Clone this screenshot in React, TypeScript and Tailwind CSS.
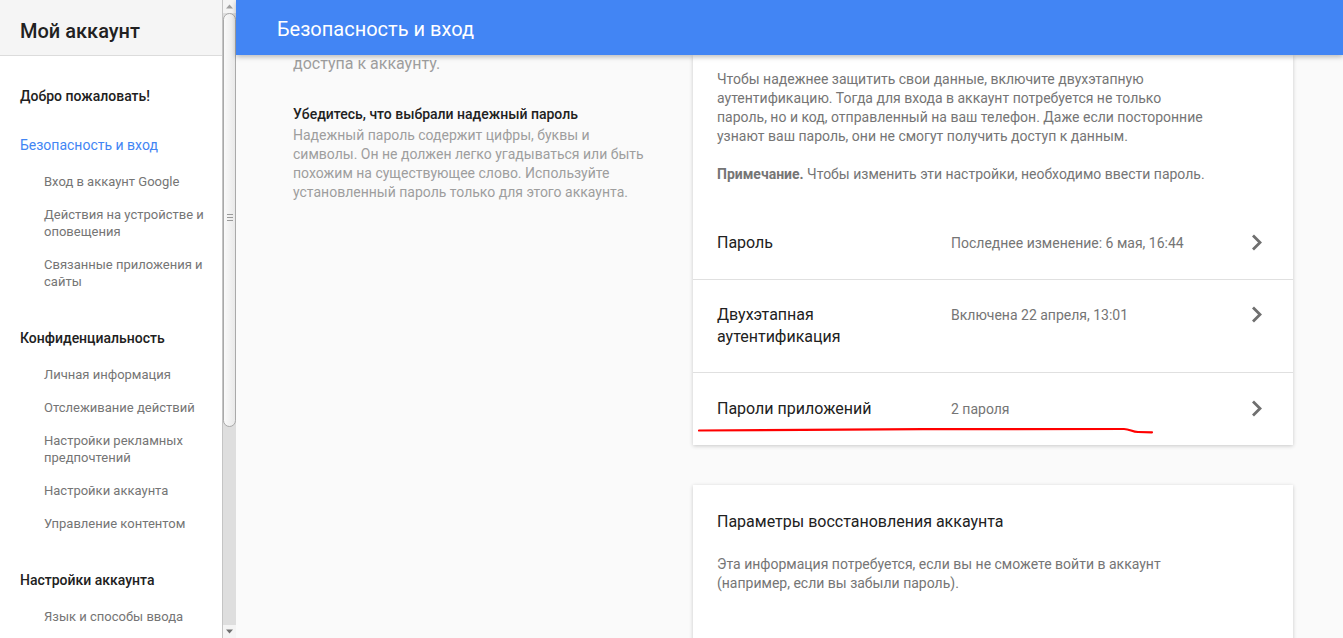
import React from "react";

const font = { fontFamily: "Roboto, 'Noto Sans', Arial, sans-serif" };

function Chevron() {
  return (
    <svg width="24" height="24" viewBox="0 0 24 24" className="shrink-0">
      <polyline points="8,4.5 15,11.5 8,18.5" fill="none" stroke="#6f6f6f" strokeWidth="2.8" strokeLinecap="butt" strokeLinejoin="miter" />
    </svg>
  );
}

function SubItem({ children }: { children: React.ReactNode }) {
  return <div className="pl-[44px] pr-[16px] text-[13px] leading-[17px] text-[#757575]">{children}</div>;
}

function Scrollbar() {
  return (
    <div className="flex w-[14px] shrink-0 flex-col bg-[#dedede] border-l border-[#c4c4c4]">
      <div className="flex h-[13px] items-center justify-center bg-[#f4f4f4]">
        <svg width="7" height="5" viewBox="0 0 7 5"><polygon points="3.5,0.5 7,4.5 0,4.5" fill="#a0a0a0" /></svg>
      </div>
      <div className="relative h-[414px] rounded-t-[7px] rounded-b-[7px] border border-[#a9a9a9] bg-gradient-to-r from-[#fafafa] to-[#e9e9e9]">
        <div className="absolute left-[3px] top-[200px] flex w-[6px] flex-col gap-[2px]">
          <div className="h-px bg-[#9a9a9a]" />
          <div className="h-px bg-[#9a9a9a]" />
          <div className="h-px bg-[#9a9a9a]" />
        </div>
      </div>
      <div className="flex-1" />
      <div className="flex h-[13px] items-center justify-center bg-[#f4f4f4]">
        <svg width="7" height="5" viewBox="0 0 7 5"><polygon points="0,0.5 7,0.5 3.5,4.5" fill="#707070" /></svg>
      </div>
    </div>
  );
}

function Row({ label, value, pad }: { label: React.ReactNode; value: string; pad: string }) {
  return (
    <div className={"flex items-start px-[24px] " + pad}>
      <div className="w-[234px] shrink-0 text-[16px] leading-[22px] text-[#212121]">{label}</div>
      <div className="flex-1 text-[14px] leading-[22px] text-[#757575]">{value}</div>
      <div className="-mt-px">
        <Chevron />
      </div>
    </div>
  );
}

export default function App() {
  return (
    <div className="flex h-[638px] w-full overflow-hidden bg-[#fafafa]" style={font}>
      {/* Sidebar */}
      <div className="flex h-full shrink-0">
        <div className="flex w-[222px] flex-col bg-white">
          <div className="flex h-[56px] shrink-0 items-center border-b border-[#dcdcdc] bg-[#f5f5f5] pl-[20px] pt-[6px]">
            <span className="text-[20px] font-medium text-[#212121]">Мой аккаунт</span>
          </div>
          <div className="flex flex-col pt-[30px]">
            <div className="pl-[20px] text-[14px] font-medium leading-[20px] text-[#212121]">Добро пожаловать!</div>
            <div className="mt-[29px] pl-[20px] text-[14px] leading-[20px] text-[#4285f4]">Безопасность и вход</div>
            <div className="mt-[18px] flex flex-col gap-[16px]">
              <SubItem>Вход в аккаунт Google</SubItem>
              <SubItem>Действия на устройстве и оповещения</SubItem>
              <SubItem>Связанные приложения и сайты</SubItem>
            </div>
            <div className="mt-[38px] pl-[20px] text-[14px] font-medium leading-[20px] text-[#212121]">Конфиденциальность</div>
            <div className="mt-[18px] flex flex-col gap-[16px]">
              <SubItem>Личная информация</SubItem>
              <SubItem>Отслеживание действий</SubItem>
              <SubItem>Настройки рекламных предпочтений</SubItem>
              <SubItem>Настройки аккаунта</SubItem>
              <SubItem>Управление контентом</SubItem>
            </div>
            <div className="mt-[38px] pl-[20px] text-[14px] font-medium leading-[20px] text-[#212121]">Настройки аккаунта</div>
            <div className="mt-[18px] flex flex-col gap-[16px]">
              <SubItem>Язык и способы ввода</SubItem>
            </div>
          </div>
        </div>
        <Scrollbar />
      </div>

      {/* Main */}
      <div className="flex min-w-0 flex-1 flex-col">
        <div className="relative z-10 flex h-[55px] shrink-0 items-center bg-[#4285f4] pl-[41px] pt-[2px] shadow-[0_2px_5px_rgba(0,0,0,0.26)]">
          <span className="text-[20px] text-white">Безопасность и вход</span>
        </div>
        <div className="flex flex-1 overflow-hidden pl-[57px]">
          <div className="mr-[40px] w-[360px] shrink-0">
            <div className="-mt-[3px] text-[16px] leading-[24px] text-[#9e9e9e]">доступа к аккаунту.</div>
            <div className="mt-[29px] text-[14px] font-medium leading-[19px] text-[#212121]">Убедитесь, что выбрали надежный пароль</div>
            <div className="mt-[2px] text-[14px] leading-[19px] text-[#9e9e9e]">
              Надежный пароль содержит цифры, буквы и<br />
              символы. Он не должен легко угадываться или быть<br />
              похожим на существующее слово. Используйте<br />
              установленный пароль только для этого аккаунта.
            </div>
          </div>

          <div className="flex w-[600px] shrink-0 flex-col">
            <div className="relative bg-white shadow-[0_1px_4px_rgba(0,0,0,0.2)]">
              <div className="px-[24px] pt-[15px] pb-[22px] text-[14px] leading-[19px] text-[#757575]">
                <p>
                  Чтобы надежнее защитить свои данные, включите двухэтапную<br />
                  аутентификацию. Тогда для входа в аккаунт потребуется не только<br />
                  пароль, но и код, отправленный на ваш телефон. Даже если посторонние<br />
                  узнают ваш пароль, они не смогут получить доступ к данным.
                </p>
                <p className="mt-[19px]">
                  <span className="font-bold">Примечание.</span> Чтобы изменить эти настройки, необходимо ввести пароль.
                </p>
              </div>
              <div className="border-b border-[#e0e0e0]">
                <Row label="Пароль" value="Последнее изменение: 6 мая, 16:44" pad="pt-[26px] pb-[24px]" />
              </div>
              <div className="border-b border-[#e0e0e0]">
                <Row label={<>Двухэтапная<br />аутентификация</>} value="Включена 22 апреля, 13:01" pad="py-[24px]" />
              </div>
              <Row label="Пароли приложений" value="2 пароля" pad="pt-[25px] pb-[24px]" />
              <svg className="pointer-events-none absolute left-[5px] top-[371px]" width="465" height="12" viewBox="0 0 465 12">
                <path d="M1 4.5 C120 3.6, 300 2.6, 426 3 C432 3.1, 434 5.8, 440 6 L454 6.3" fill="none" stroke="#ff0000" strokeWidth="2.2" strokeLinecap="round" />
              </svg>
            </div>

            <div className="mt-[40px] bg-white px-[24px] pt-[26px] pb-[60px] shadow-[0_1px_4px_rgba(0,0,0,0.2)]">
              <div className="text-[16px] leading-[22px] text-[#212121]">Параметры восстановления аккаунта</div>
              <div className="mt-[22px] text-[14px] leading-[19px] text-[#757575]">
                Эта информация потребуется, если вы не сможете войти в аккаунт<br />
                (например, если вы забыли пароль).
              </div>
            </div>
          </div>
        </div>
      </div>
    </div>
  );
}
